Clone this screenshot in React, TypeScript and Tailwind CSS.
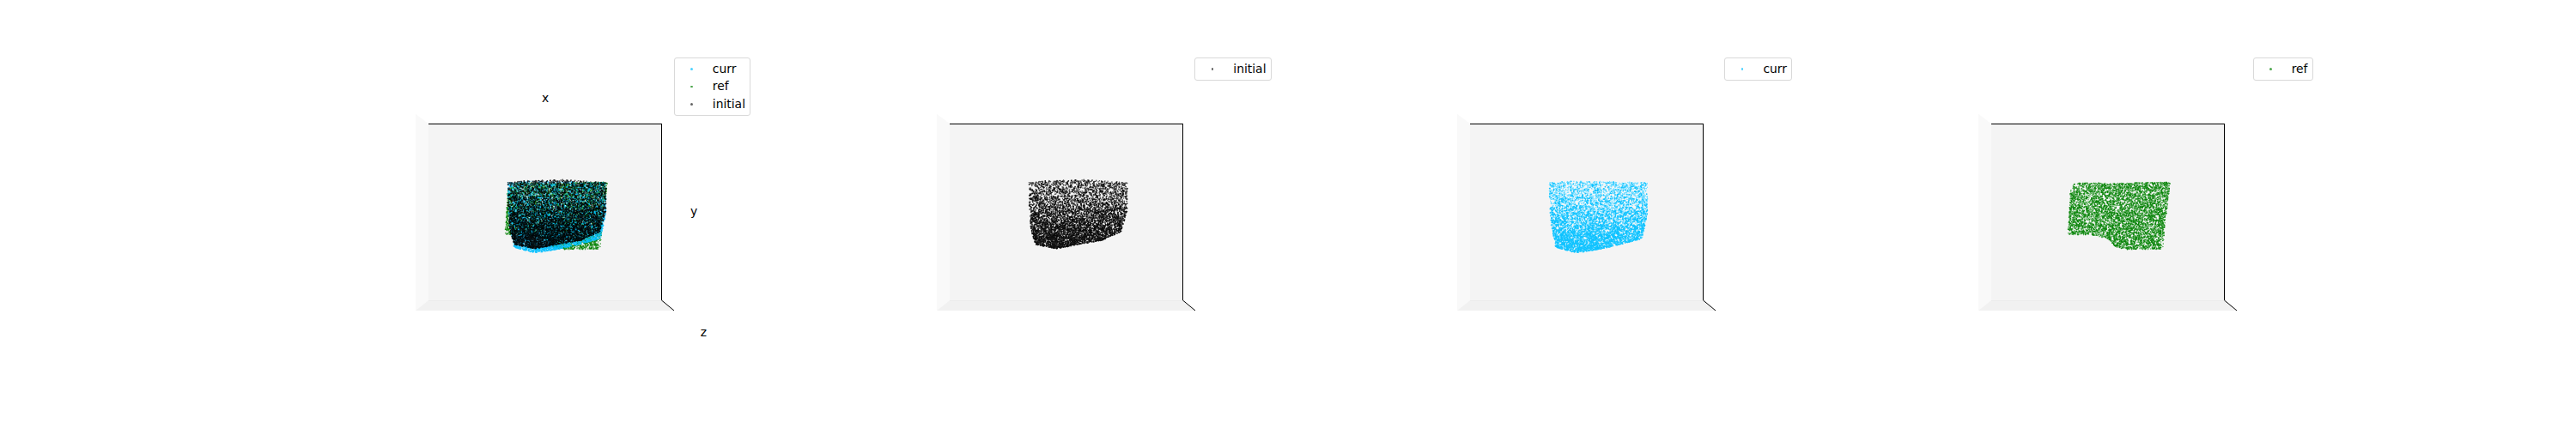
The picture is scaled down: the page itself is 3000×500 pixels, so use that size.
import React from "react";

type Pt = [number, number];

// outlines read from the reference, in panel coordinates
const zoomPts = (pts: Pt[], dx: number): Pt[] => pts.map(([x, y]) => [x / 3 + dx, 50 + y / 3]);

const initialShape = zoomPts(
  [[384, 488], [440, 482], [580, 478], [728, 488], [726, 590], [705, 660], [640, 690], [480, 720], [405, 705], [390, 650], [384, 560]],
  3.5
);
const currShape = zoomPts(
  [[373, 488], [470, 482], [717, 488], [715, 600], [697, 685], [560, 720], [470, 735], [395, 715], [380, 640], [373, 560]],
  7
);
const refShape = zoomPts(
  [[375, 490], [520, 490], [710, 487], [705, 540], [692, 640], [685, 722], [560, 722], [520, 715], [495, 685], [430, 670], [400, 672], [353, 670], [358, 600], [362, 520]],
  10.5
);

function inside(p: Pt, poly: Pt[]) {
  let hit = false;
  for (let i = 0, j = poly.length - 1; i < poly.length; j = i++) {
    const [xi, yi] = poly[i];
    const [xj, yj] = poly[j];
    if (yi > p[1] !== yj > p[1] && p[0] < ((xj - xi) * (p[1] - yi)) / (yj - yi) + xi) hit = !hit;
  }
  return hit;
}

function rng(seed: number) {
  let s = seed;
  return () => {
    s = (s * 1664525 + 1013904223) % 4294967296;
    return s / 4294967296;
  };
}

// bias > 0: points get denser toward the bottom of the cloud
function cloud(poly: Pt[], count: number, seed: number, bias: number) {
  const rand = rng(seed);
  let d = "";
  let n = 0;
  while (n < count) {
    const p: Pt = [125 + rand() * 128, 205 + rand() * 100];
    if (!inside(p, poly)) continue;
    const t = Math.min(1, (p[1] - 205) / 85);
    if (rand() > 1 - bias + bias * t * t) continue;
    d += `M${p[0].toFixed(1)} ${p[1].toFixed(1)}h0`;
    n++;
  }
  return d;
}

type CloudData = { base: string; near: string; color: string; baseOpacity: number };

const initialCloud: CloudData = {
  base: cloud(initialShape, 3000, 11, 0),
  near: cloud(initialShape, 3000, 12, 0.9),
  color: "#000000",
  baseOpacity: 0.7,
};
const currCloud: CloudData = {
  base: cloud(currShape, 3400, 23, 0),
  near: cloud(currShape, 2800, 24, 0.9),
  color: "#00bfff",
  baseOpacity: 0.55,
};
const refCloud: CloudData = {
  base: cloud(refShape, 3200, 37, 0),
  near: cloud(refShape, 2000, 38, 0.3),
  color: "#008000",
  baseOpacity: 0.7,
};

// halo is the white rim of the scatter markers; the overlay panel goes without it
const Cloud = ({ data, halo = true }: { data: CloudData; halo?: boolean }) => (
  <g fill="none" strokeLinecap="round">
    {halo && <path d={data.base} stroke="#ffffff" strokeWidth={2.3} />}
    <path d={data.base} stroke={data.color} strokeWidth={1.6} opacity={data.baseOpacity} />
    <path d={data.near} stroke={data.color} strokeWidth={1.7} opacity={0.9} />
  </g>
);

type Entry = { label: string; color: string };

const curr: Entry = { label: "curr", color: "bg-[#00bfff]" };
const ref: Entry = { label: "ref", color: "bg-[#008000]" };
const initial: Entry = { label: "initial", color: "bg-[#222222]" };

function Legend({ items }: { items: Entry[] }) {
  return (
    <div className="absolute top-[67px] right-[192.5px] rounded-[3px] border border-[#d9d9d9] bg-white py-[2px] pl-[18.5px] pr-[5px] text-[13.9px] text-black">
      {items.map((item) => (
        <div key={item.label} className="flex h-[20.5px] items-center">
          <span className={`mr-[23px] size-[2.5px] rounded-full opacity-70 ${item.color}`} />
          <span>{item.label}</span>
        </div>
      ))}
    </div>
  );
}

function Panel({ items, labels, children }: { items: Entry[]; labels?: boolean; children: React.ReactNode }) {
  return (
    <div className="relative h-full w-[606.5px] shrink-0">
      <svg viewBox="0 0 606.5 500" className="h-full w-full">
        <polygon points="24,132.7 39,144.3 39,350 24,362" fill="#f9f9f9" />
        <rect x="39" y="144.3" width="271.7" height="205.7" fill="#f4f4f4" />
        <polygon points="39,350 310.7,350 325,362 24,362" fill="#f1f1f1" />
        <path d="M39 350.5H310" fill="none" stroke="#ececec" strokeWidth={1} />
        {children}
        <path d="M39 144.5H310.5V350" fill="none" stroke="#000000" strokeWidth={1} shapeRendering="crispEdges" />
        <path d="M310.5 350L325 362" fill="none" stroke="#000000" strokeWidth={1} />
        {labels && (
          <g fontSize="13.9" fill="#000000" textAnchor="middle" fontFamily="'DejaVu Sans', sans-serif">
            <text x="175" y="119">x</text>
            <text x="348" y="251">y</text>
            <text x="359.5" y="392">z</text>
          </g>
        )}
      </svg>
      <Legend items={items} />
    </div>
  );
}

export default function App() {
  return (
    <div className="flex h-[500px] w-[3000px] overflow-hidden bg-white pl-[460px] font-['DejaVu_Sans',sans-serif]">
      <Panel items={[curr, ref, initial]} labels>
        <Cloud data={refCloud} halo={false} />
        <Cloud data={currCloud} halo={false} />
        <Cloud data={initialCloud} halo={false} />
      </Panel>
      <Panel items={[initial]}>
        <Cloud data={initialCloud} />
      </Panel>
      <Panel items={[curr]}>
        <Cloud data={currCloud} />
      </Panel>
      <Panel items={[ref]}>
        <Cloud data={refCloud} />
      </Panel>
    </div>
  );
}
